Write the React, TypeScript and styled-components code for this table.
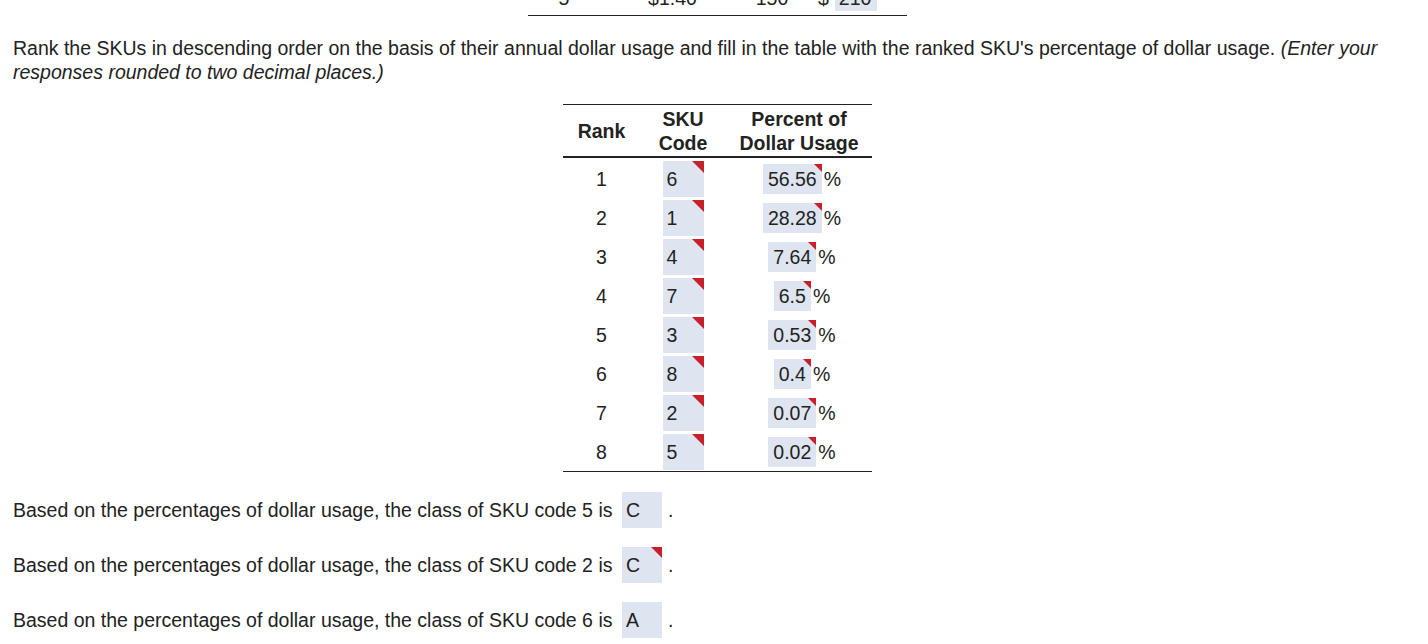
import React from 'react'
import styled, { createGlobalStyle } from 'styled-components'

const GlobalStyle = createGlobalStyle`
	html, body {
		margin: 0;
		padding: 0;
		background: #fff;
	}
	body {
		font-family: "Liberation Sans", Arial, sans-serif;
		font-size: 19.5px;
		color: #222;
		overflow: hidden;
	}
`;

const INPUT_BG = '#dee5f0';
const FLAG_RED = '#c8202a';

interface Ranked { rank: number; sku: string; pct: string }
const rows: Ranked[] = [
	{ rank: 1, sku: '6', pct: '56.56' },
	{ rank: 2, sku: '1', pct: '28.28' },
	{ rank: 3, sku: '4', pct: '7.64' },
	{ rank: 4, sku: '7', pct: '6.5' },
	{ rank: 5, sku: '3', pct: '0.53' },
	{ rank: 6, sku: '8', pct: '0.4' },
	{ rank: 7, sku: '2', pct: '0.07' },
	{ rank: 8, sku: '5', pct: '0.02' },
];

const classRows = [
	{ sku: '5', cls: 'C', flagged: false },
	{ sku: '2', cls: 'C', flagged: true },
	{ sku: '6', cls: 'A', flagged: false },
];

const Page = styled.div`
	padding: 0 0 0 13px;
	height: 644px;
	overflow: hidden;
`;

/** tail of the table above, scrolled mostly out of view */
const PrevTable = styled.div`
	margin-left: 515px;
	width: 379px;
	height: 15px;
	border-bottom: 1px solid #222;
	overflow: hidden;
	display: flex;
	align-items: flex-end;
`;
const PrevRow = styled.div`
	display: grid;
	grid-template-columns: 72px 145px 54px 108px;
	align-items: center;
	height: 36px;
	margin-bottom: 4px;
	line-height: 22px;
`;
const PrevCell = styled.div`
	text-align: center;
	transform: translateY(5px);
`;
const PrevAnswer = styled.div`
	display: flex;
	align-items: center;
	padding-left: 19px;
`;
const PrevBox = styled.span`
	display: inline-block;
	background: ${INPUT_BG};
	height: 36px;
	line-height: 46px;
	padding: 0 4px;
	margin-left: 6px;
	width: 34px;
`;

const Prompt = styled.p`
	margin: 20px 0 0;
	line-height: 24px;
	width: 1380px;
	em { font-style: italic; }
`;

const Table = styled.div`
	margin: 20px 0 0 550px;
	width: 309px;
	border-top: 1px solid #222;
	border-bottom: 1px solid #222;
	padding-bottom: 1px;
`;
const Grid = styled.div<{ $head?: boolean }>`
	display: grid;
	grid-template-columns: 77px 86px 146px;
	align-items: center;
	${({ $head }) => $head
		? `height: 51px; border-bottom: 2px solid #222; font-weight: bold; line-height: 24px;`
		: `height: 36px; padding-top: 3px;`}
`;
const Cell = styled.div<{ $shift?: number }>`
	text-align: center;
	display: flex;
	justify-content: center;
	align-items: center;
	padding-left: ${({ $shift }) => $shift || 0}px;
`;
const Answer = styled.span<{ $w?: number; $h: number; $flag?: number; $pad?: string }>`
	position: relative;
	display: inline-flex;
	align-items: center;
	box-sizing: border-box;
	background: ${INPUT_BG};
	height: ${({ $h }) => $h}px;
	${({ $w }) => $w ? `width: ${$w}px;` : ''}
	padding: ${({ $pad }) => $pad || '0 4px'};
	&::after {
		content: '';
		display: ${({ $flag }) => $flag ? 'block' : 'none'};
		position: absolute;
		top: 0;
		right: 0;
		border-style: solid;
		border-width: 0 ${({ $flag }) => $flag || 0}px ${({ $flag }) => $flag || 0}px 0;
		border-color: transparent ${FLAG_RED} transparent transparent;
	}
`;
const Unit = styled.span`
	margin-left: 2px;
`;

const Sentences = styled.div`
	display: flex;
	flex-direction: column;
	gap: 19px;
	margin-top: 20px;
`;
const Sentence = styled.div`
	display: flex;
	align-items: center;
	height: 36px;
	white-space: pre;
	& > ${Answer} { margin-left: 4px; }
`;
const Period = styled.span`
	margin-left: 6px;
`;

export default function App() {
	return (
		<Page>
			<GlobalStyle />
			<PrevTable>
				<PrevRow>
					<PrevCell>5</PrevCell>
					<PrevCell>$1.40</PrevCell>
					<PrevCell>150</PrevCell>
					<PrevAnswer>
						<PrevCell>$</PrevCell>
						<PrevBox>210</PrevBox>
					</PrevAnswer>
				</PrevRow>
			</PrevTable>

			<Prompt>
				Rank the SKUs in descending order on the basis of their annual dollar usage and fill in the table with the ranked SKU's percentage of dollar usage. <em>(Enter your responses rounded to two decimal places.)</em>
			</Prompt>

			<Table>
				<Grid $head>
					<Cell>Rank</Cell>
					<Cell>SKU<br />Code</Cell>
					<Cell>Percent of<br />Dollar Usage</Cell>
				</Grid>
				{rows.map(r => (
					<Grid key={r.rank}>
						<Cell>{r.rank}</Cell>
						<Cell>
							<Answer $w={41} $h={36} $flag={12}>{r.sku}</Answer>
						</Cell>
						<Cell $shift={6}>
							<Answer $h={30} $flag={8} $pad="0 5px">{r.pct}</Answer>
							<Unit>%</Unit>
						</Cell>
					</Grid>
				))}
			</Table>

			<Sentences>
				{classRows.map(c => (
					<Sentence key={c.sku}>
						Based on the percentages of dollar usage, the class of SKU code {c.sku} is{' '}
						<Answer $w={40} $h={36} $flag={c.flagged ? 11 : 0}>{c.cls}</Answer>
						<Period>.</Period>
					</Sentence>
				))}
			</Sentences>
		</Page>
	);
}
